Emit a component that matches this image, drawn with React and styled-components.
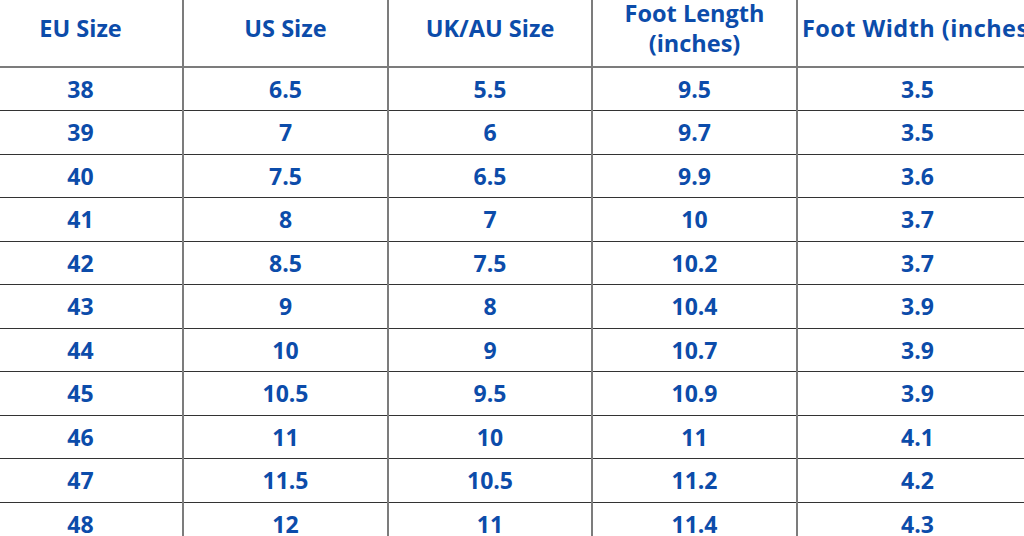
import React from "react";
import styled, { createGlobalStyle } from "styled-components";

const Global = createGlobalStyle`
  html, body { margin: 0; padding: 0; background: #ffffff; overflow: hidden; }
  body { font-family: "Open Sans", "Liberation Sans", sans-serif; }
`;

const Page = styled.div`
  width: 1024px;
  height: 536px;
  overflow: hidden;
  background: #ffffff;
`;

const Table = styled.table`
  margin-left: -21px;
  width: 1060px;
  table-layout: fixed;
  border-collapse: collapse;
  color: #0c4caa;
  font-weight: 700;
`;

const Col = styled.col`
  width: ${(p) => p.$w}px;
`;

const HeadCell = styled.th`
  height: 67px;
  padding: 0;
  box-sizing: border-box;
  font-size: 23.5px;
  line-height: 30px;
  font-weight: 700;
  text-align: center;
  vertical-align: middle;
  border-left: 2px solid #7c7c7c;
  border-bottom: 2px solid #7c7c7c;
  &:first-child { border-left: none; }
  &:last-child {
    white-space: nowrap;
    text-align: left;
    padding-left: 4px;
    letter-spacing: 0.45px;
  }
`;

const HeadLabel = styled.div`
  margin: -5px 0 5px;
`;

const Row = styled.tr`
  height: ${(p) => (p.$even ? 44 : 43)}px;
`;

const Cell = styled.td`
  padding: 0;
  font-size: 23px;
  line-height: 28px;
  text-align: center;
  vertical-align: middle;
  border-left: 2px solid #7c7c7c;
  border-bottom: 1px solid #333333;
  &:first-child { border-left: none; }
  &:last-child { padding-right: 2px; }
`;

const widths = [204, 205, 204, 205, 242];

const headers = ["EU Size", "US Size", "UK/AU Size", "Foot Length (inches)", "Foot Width (inches)"];

const rows = [
  ["38", "6.5", "5.5", "9.5", "3.5"],
  ["39", "7", "6", "9.7", "3.5"],
  ["40", "7.5", "6.5", "9.9", "3.6"],
  ["41", "8", "7", "10", "3.7"],
  ["42", "8.5", "7.5", "10.2", "3.7"],
  ["43", "9", "8", "10.4", "3.9"],
  ["44", "10", "9", "10.7", "3.9"],
  ["45", "10.5", "9.5", "10.9", "3.9"],
  ["46", "11", "10", "11", "4.1"],
  ["47", "11.5", "10.5", "11.2", "4.2"],
  ["48", "12", "11", "11.4", "4.3"],
];

export default function App() {
  return (
    <Page>
      <Global />
      <Table>
        <colgroup>
          {widths.map((w, i) => (
            <Col key={i} $w={w} />
          ))}
        </colgroup>
        <thead>
          <tr>
            {headers.map((h) => (
              <HeadCell key={h}>
                <HeadLabel>{h}</HeadLabel>
              </HeadCell>
            ))}
          </tr>
        </thead>
        <tbody>
          {rows.map((r, i) => (
            <Row key={r[0]} $even={i % 2 === 1}>
              {r.map((c, j) => (
                <Cell key={j}>{c}</Cell>
              ))}
            </Row>
          ))}
        </tbody>
      </Table>
    </Page>
  );
}
